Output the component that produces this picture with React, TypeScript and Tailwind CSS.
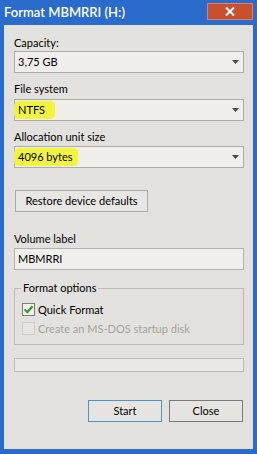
import React from 'react';

const Arrow = () => (
  <svg width="7" height="4" viewBox="0 0 7 4" className="shrink-0">
    <path d="M0 0 H7 L3.5 4 Z" fill="#4a4a4a" />
  </svg>
);

const Combo = ({ value, mark = '', className = '' }: { value: string; mark?: string; className?: string }) => (
  <div
    className={`h-[22px] border border-[#adaba6] bg-[#efeeeb] flex items-center justify-between pl-[3px] pr-[4px] ${className}`}
  >
    {mark ? (
      <span className={`-ml-[4px] pl-[4px] py-[2px] bg-[#f1f33f] rounded-[5px] ${mark}`}>{value}</span>
    ) : (
      <span>{value}</span>
    )}
    <Arrow />
  </div>
);

const Check = ({ checked, disabled, label, className = '' }: { checked?: boolean; disabled?: boolean; label: string; className?: string }) => (
  <div className={`flex items-center h-[13px] ${className}`}>
    <div
      className={`w-[13px] h-[13px] border flex items-center justify-center ${
        disabled ? 'border-[#cfccc7] bg-[#e6e4e0]' : 'border-[#7f7d79] bg-[#f2f1ef]'
      }`}
    >
      {checked && (
        <svg width="11" height="11" viewBox="0 0 11 11">
          <path d="M1.6 5.4 L4.3 8.3 L9.6 2.2" fill="none" stroke="#2f9a2c" strokeWidth="2.1" />
        </svg>
      )}
    </div>
    <span className={`ml-[3px] ${disabled ? 'text-[#a4a29d]' : 'text-black'}`}>{label}</span>
  </div>
);

export default function App() {
  return (
    <div className="w-[257px] h-[454px] bg-[#2b6bcb] flex flex-col font-['Lato','Liberation_Sans',sans-serif]">
      {/* title bar */}
      <div className="h-[25px] flex items-start justify-between">
        <span className="ml-[4px] mt-[5px] text-white text-[13px] font-semibold leading-[15px]">
          Format MBMRRI (H:)
        </span>
        <div className="mt-[3px] mr-[4px] w-[46px] h-[17px] bg-[#c9502f] border border-[#d9826a] flex items-center justify-center">
          <svg width="10" height="9" viewBox="0 0 10 9">
            <path d="M1 0.5 L9 8.5 M9 0.5 L1 8.5" stroke="#fff" strokeWidth="2" />
          </svg>
        </div>
      </div>

      {/* client area */}
      <div className="mx-[4px] h-[424px] bg-[#e3e1dd] pl-[10px] pr-[9px] flex flex-col text-[11px] leading-[14px] text-black">
        <div className="mt-[11px] h-[14px]">Capacity:</div>
        <Combo value="3,75 GB" className="mt-[1px]" />

        <div className="mt-[9px] h-[14px]">File system</div>
        <Combo value="NTFS" mark="pr-[10px]" className="mt-[3px]" />

        <div className="mt-[9px] h-[14px]">Allocation unit size</div>
        <Combo value="4096 bytes" mark="pr-[5px]" className="mt-[2px]" />

        <div className="mt-[22px] ml-[1px] w-[133px] h-[22px] border border-[#a9a8a4] bg-[#e7e6e3] flex items-center justify-center">
          Restore device defaults
        </div>

        <div className="mt-[20px] h-[14px]">Volume label</div>
        <div className="mt-[2px] h-[22px] border border-[#b3b1ac] bg-[#f0efec] flex items-center pl-[3px]">
          MBMRRI
        </div>

        <div className="mt-[18px] relative h-[57px] border border-[#bdbab5] pl-[7px] pt-[14px]">
          <span className="absolute -top-[8px] left-[6px] px-[2px] bg-[#e3e1dd]">Format options</span>
          <Check checked label="Quick Format" />
          <Check disabled label="Create an MS-DOS startup disk" className="mt-[6px]" />
        </div>

        <div className="mt-[13px] h-[14px] border border-[#bdbbb6] bg-[#e9e8e5]" />

        <div className="mt-[28px] flex justify-end gap-[7px] pr-[1px]">
          <div className="w-[74px] h-[22px] border border-[#4e94c6] bg-[#e5e4e1] flex items-center justify-center">
            Start
          </div>
          <div className="w-[74px] h-[22px] border border-[#7a7977] bg-[#e5e4e1] flex items-center justify-center">
            Close
          </div>
        </div>
      </div>
    </div>
  );
}
